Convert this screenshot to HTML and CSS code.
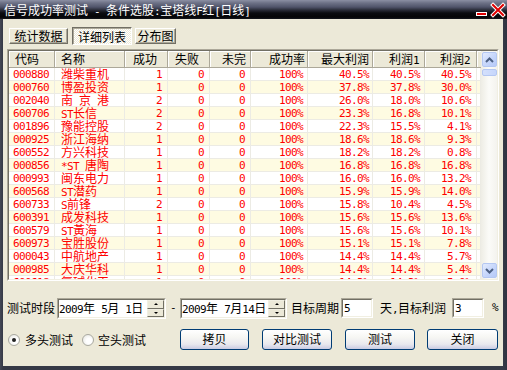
FILE: index.html
```html
<!DOCTYPE html>
<html>
<head>
<meta charset="utf-8">
<link rel="stylesheet" href="styles.css">
</head>
<body>
<div class="win">
  <div class="titlebar">
    <span class="title">信号成功率测试<span class="m"> - </span>条件选股<span class="m">:</span>宝塔线<span class="m">F</span>红<span class="m">[</span>日线<span class="m">]</span></span>
    <svg class="ctl" width="31" height="19" viewBox="0 0 31 19">
      <rect x="0" y="12" width="11" height="4" fill="#fff"/>
      <rect x="1" y="13" width="9" height="2" fill="#e00000"/>
      <path d="M17 5 L27 15 M27 5 L17 15" stroke="#fff" stroke-width="4" stroke-linecap="square"/>
      <path d="M17 5 L27 15 M27 5 L17 15" stroke="#e00000" stroke-width="2" stroke-linecap="square"/>
    </svg>
  </div>
  <div class="client">
    <div class="tabs">
      <div class="tab t1">统计数据</div>
      <div class="tab t2 on">详细列表</div>
      <div class="tab t3">分布图</div>
    </div>
    <div class="list">
      <div class="list-in">
        <div class="grid">
          <table>
            <colgroup>
              <col class="w46"><col class="w70"><col class="w43"><col class="w42"><col class="w41"><col class="w57"><col class="w65"><col class="w52"><col class="w52"><col class="w4">
            </colgroup>
            <thead>
              <tr>
                <th class="hl h1">代码</th><th class="hl h2">名称</th><th class="hr p11">成功</th><th class="hr p11">失败</th><th class="hr p5">未完</th><th class="hr p3">成功率</th><th class="hr p4">最大利润</th><th class="hr p6"><span>利润</span><span class="m">1</span></th><th class="hr p7"><span>利润</span><span class="m">2</span></th><th class="fill"></th>
              </tr>
            </thead>
            <tbody>
              <tr><td class="c">000880</td><td class="nm">潍柴重机</td><td class="n r7">1</td><td class="n r7">0</td><td class="n r7">0</td><td class="n r6">100%</td><td class="n r5">40.5%</td><td class="n r6">40.5%</td><td class="n r7">40.5%</td><td></td></tr>
              <tr><td class="c">000760</td><td class="nm">博盈投资</td><td class="n r7">1</td><td class="n r7">0</td><td class="n r7">0</td><td class="n r6">100%</td><td class="n r5">37.8%</td><td class="n r6">37.8%</td><td class="n r7">30.0%</td><td></td></tr>
              <tr><td class="c">002040</td><td class="nm">南<span class="m"> </span>京<span class="m"> </span>港</td><td class="n r7">2</td><td class="n r7">0</td><td class="n r7">0</td><td class="n r6">100%</td><td class="n r5">26.0%</td><td class="n r6">18.0%</td><td class="n r7">10.6%</td><td></td></tr>
              <tr><td class="c">600706</td><td class="nm"><span class="m">ST</span>长信</td><td class="n r7">2</td><td class="n r7">0</td><td class="n r7">0</td><td class="n r6">100%</td><td class="n r5">23.3%</td><td class="n r6">16.8%</td><td class="n r7">10.1%</td><td></td></tr>
              <tr><td class="c">001896</td><td class="nm">豫能控股</td><td class="n r7">2</td><td class="n r7">0</td><td class="n r7">0</td><td class="n r6">100%</td><td class="n r5">22.3%</td><td class="n r6">15.5%</td><td class="n r7">4.1%</td><td></td></tr>
              <tr><td class="c">000925</td><td class="nm">浙江海纳</td><td class="n r7">1</td><td class="n r7">0</td><td class="n r7">0</td><td class="n r6">100%</td><td class="n r5">18.6%</td><td class="n r6">18.6%</td><td class="n r7">9.3%</td><td></td></tr>
              <tr><td class="c">600552</td><td class="nm">方兴科技</td><td class="n r7">1</td><td class="n r7">0</td><td class="n r7">0</td><td class="n r6">100%</td><td class="n r5">18.2%</td><td class="n r6">18.2%</td><td class="n r7">0.8%</td><td></td></tr>
              <tr><td class="c">000856</td><td class="nm"><span class="m">*ST </span>唐陶</td><td class="n r7">1</td><td class="n r7">0</td><td class="n r7">0</td><td class="n r6">100%</td><td class="n r5">16.8%</td><td class="n r6">16.8%</td><td class="n r7">16.8%</td><td></td></tr>
              <tr><td class="c">000993</td><td class="nm">闽东电力</td><td class="n r7">1</td><td class="n r7">0</td><td class="n r7">0</td><td class="n r6">100%</td><td class="n r5">16.0%</td><td class="n r6">16.0%</td><td class="n r7">13.2%</td><td></td></tr>
              <tr><td class="c">600568</td><td class="nm"><span class="m">ST</span>潜药</td><td class="n r7">1</td><td class="n r7">0</td><td class="n r7">0</td><td class="n r6">100%</td><td class="n r5">15.9%</td><td class="n r6">15.9%</td><td class="n r7">14.0%</td><td></td></tr>
              <tr><td class="c">600733</td><td class="nm"><span class="m">S</span>前锋</td><td class="n r7">2</td><td class="n r7">0</td><td class="n r7">0</td><td class="n r6">100%</td><td class="n r5">15.8%</td><td class="n r6">10.4%</td><td class="n r7">4.5%</td><td></td></tr>
              <tr><td class="c">600391</td><td class="nm">成发科技</td><td class="n r7">1</td><td class="n r7">0</td><td class="n r7">0</td><td class="n r6">100%</td><td class="n r5">15.6%</td><td class="n r6">15.6%</td><td class="n r7">13.6%</td><td></td></tr>
              <tr><td class="c">600579</td><td class="nm"><span class="m">ST</span>黃海</td><td class="n r7">1</td><td class="n r7">0</td><td class="n r7">0</td><td class="n r6">100%</td><td class="n r5">15.6%</td><td class="n r6">15.6%</td><td class="n r7">10.1%</td><td></td></tr>
              <tr><td class="c">600973</td><td class="nm">宝胜股份</td><td class="n r7">1</td><td class="n r7">0</td><td class="n r7">0</td><td class="n r6">100%</td><td class="n r5">15.1%</td><td class="n r6">15.1%</td><td class="n r7">7.8%</td><td></td></tr>
              <tr><td class="c">000043</td><td class="nm">中航地产</td><td class="n r7">1</td><td class="n r7">0</td><td class="n r7">0</td><td class="n r6">100%</td><td class="n r5">14.4%</td><td class="n r6">14.4%</td><td class="n r7">5.7%</td><td></td></tr>
              <tr><td class="c">000985</td><td class="nm">大庆华科</td><td class="n r7">1</td><td class="n r7">0</td><td class="n r7">0</td><td class="n r6">100%</td><td class="n r5">14.4%</td><td class="n r6">14.4%</td><td class="n r7">5.4%</td><td></td></tr>
              <tr><td class="c">600618</td><td class="nm">氯碱化工</td><td class="n r7">1</td><td class="n r7">0</td><td class="n r7">0</td><td class="n r6">100%</td><td class="n r5">14.3%</td><td class="n r6">14.3%</td><td class="n r7">5.0%</td><td></td></tr>
            </tbody>
          </table>
        </div>
        <div class="vscroll">
          <div class="sbtn up"><svg width="9" height="6" viewBox="0 0 9 6"><path d="M1 5 L4.5 1.5 L8 5" fill="none" stroke="#4d6185" stroke-width="2"/></svg></div>
          <div class="thumb"></div>
          <div class="track"></div>
          <div class="sbtn dn"><svg width="9" height="6" viewBox="0 0 9 6"><path d="M1 1 L4.5 4.5 L8 1" fill="none" stroke="#4d6185" stroke-width="2"/></svg></div>
        </div>
      </div>
    </div>
    <div class="row1">
      <span class="lbl w48">测试时段</span>
      <div class="date d1">
        <div class="date-in">
          <span class="dtext"><span class="m">2009</span>年<span class="m"> 5</span>月<span class="m"> 1</span>日</span>
          <span class="spin"><span class="sp"><i class="au"></i></span><span class="sp"><i class="ad"></i></span></span>
        </div>
      </div>
      <span class="dash m">-</span>
      <div class="date d2">
        <div class="date-in">
          <span class="dtext"><span class="m">2009</span>年<span class="m"> 7</span>月<span class="m">14</span>日</span>
          <span class="spin"><span class="sp"><i class="au"></i></span><span class="sp"><i class="ad"></i></span></span>
        </div>
      </div>
      <span class="lbl l2">目标周期</span>
      <div class="field f1"><div class="field-in"><span class="m">5</span></div></div>
      <span class="lbl l3">天<span class="m">,</span>目标利润</span>
      <div class="field f2"><div class="field-in"><span class="m">3</span></div></div>
      <span class="lbl pct m">%</span>
    </div>
    <div class="row2">
      <label class="radio r1"><span class="dot on"></span><span>多头测试</span></label>
      <label class="radio r2"><span class="dot"></span><span>空头测试</span></label>
      <div class="btn b1">拷贝</div>
      <div class="btn b2">对比测试</div>
      <div class="btn b3">测试</div>
      <div class="btn b4">关闭</div>
    </div>
  </div>
</div>
</body>
</html>
```
FILE: styles.css
```css
html, body {
  margin: 0;
  padding: 0;
  background: #2e3240;
}
body {
  font-family: "Noto Sans CJK SC", "Noto Sans CJK JP", sans-serif;
  font-size: 12px;
  color: #000;
  overflow: hidden;
}
.m {
  font-family: "DejaVu Sans Mono", monospace;
  font-size: 11px;
  letter-spacing: -0.6px;
}
.win {
  width: 507px;
  height: 370px;
  display: flex;
  flex-direction: column;
  background: linear-gradient(90deg, #444856 0, #353946 3px, #353946 503px, #2f3340 507px);
}
.titlebar {
  height: 19px;
  flex: none;
  display: flex;
  align-items: flex-start;
  background: linear-gradient(180deg, #8b8fa3 0px, #6d7186 3px, #50546a 7px, #2a2c38 10px, #0b0c10 13px, #050506 17px, #15171d 19px);
  color: #fff;
}
.title {
  margin: 3px 0 0 4px;
  line-height: 14px;
  white-space: nowrap;
}
.ctl {
  margin-left: auto;
  flex: none;
}
.client {
  flex: 1;
  margin: 0 4px 4px 3px;
  background: #ece9d8;
  display: flex;
  flex-direction: column;
}
.tabs {
  display: flex;
  align-items: flex-start;
  height: 18px;
  margin: 8px 0 0 6px;
}
.tab {
  box-sizing: border-box;
  height: 16px;
  margin-top: 1px;
  line-height: 14px;
  text-align: center;
  border: 1px solid;
  border-color: #fff #716f64 #716f64 #fff;
  box-shadow: inset -1px -1px #aca899;
  background: #ece9d8;
  white-space: nowrap;
}
.t1 { width: 59px; }
.t2 { width: 60px; margin-left: 4px; }
.t3 { width: 41px; margin-left: 3px; }
.tab.on {
  height: 18px;
  margin-top: 0;
  line-height: 16px;
  padding-top: 1px;
  border-color: #716f64 #fff #fff #716f64;
  box-shadow: inset 1px 1px #aca899;
  background: repeating-conic-gradient(#ffffff 0 25%, #ece9d8 0 50%) 0 0 / 2px 2px;
}
.list {
  margin: 4px 0 0 4px;
  width: 492px;
  height: 232px;
  box-sizing: border-box;
  border: 1px solid;
  border-color: #aca899 #fff #fff #aca899;
}
.list-in {
  height: 100%;
  box-sizing: border-box;
  border: 1px solid;
  border-color: #716f64 #f1efe2 #f1efe2 #716f64;
  display: flex;
  background: #fff;
  overflow: hidden;
}
.grid {
  width: 472px;
  flex: none;
  overflow: hidden;
}
table {
  table-layout: fixed;
  border-collapse: separate;
  border-spacing: 0;
  width: 472px;
}
.w46 { width: 46px; }
.w70 { width: 70px; }
.w43 { width: 43px; }
.w42 { width: 42px; }
.w41 { width: 41px; }
.w57 { width: 57px; }
.w65 { width: 65px; }
.w52 { width: 52px; }
.w4 { width: 4px; }
th {
  height: 17px;
  box-sizing: border-box;
  padding: 0;
  font-weight: normal;
  background: #ece9d8;
  border-right: 1px solid #aca899;
  border-bottom: 1px solid #aca899;
  box-shadow: inset 1px 1px #fff;
  line-height: 15px;
  white-space: nowrap;
  overflow: hidden;
  vertical-align: top;
}
th .m { line-height: 10px; }
th.fill { border-right: 0; }
.hl { text-align: left; }
.hr { text-align: right; }
.h1 { padding-left: 6px; }
.h2 { padding-left: 6px; }
.p11 { padding-right: 10px; }
.p5 { padding-right: 4px; }
.p3 { padding-right: 2px; }
.p4 { padding-right: 3px; }
.p6 { padding-right: 5px; }
.p7 { padding-right: 6px; }
td {
  height: 13px;
  box-sizing: border-box;
  padding: 0;
  line-height: 12px;
  color: #ff0000;
  box-shadow: inset -1px -1px #ecebe4;
  white-space: nowrap;
  vertical-align: top;
}
td .m { line-height: 10px; }
tbody tr:nth-child(even) td { background: #fefbe2; }
.c, .n {
  font-family: "DejaVu Sans Mono", monospace;
  font-size: 11px;
  letter-spacing: -0.6px;
  line-height: 13px;
}
.c { padding-left: 4px; }
.nm { padding-left: 6px; }
.n { text-align: right; }
.r7 { padding-right: 6px; }
.r6 { padding-right: 5px; }
.r5 { padding-right: 4px; }
.vscroll {
  width: 16px;
  flex: none;
  display: flex;
  flex-direction: column;
  align-items: center;
  background: linear-gradient(90deg, #eeede5, #fbfbf8 50%, #f4f3ee);
}
.sbtn {
  width: 15px;
  height: 15px;
  box-sizing: border-box;
  border: 1px solid #b4c7f2;
  border-radius: 2px;
  background: linear-gradient(135deg, #e3ebfd, #c3d4fb 60%, #b6c9f7);
  display: flex;
  align-items: center;
  justify-content: center;
}
.up { margin-top: 1px; }
.dn { margin-bottom: 1px; }
.thumb {
  width: 15px;
  height: 7px;
  margin-top: 2px;
  box-sizing: border-box;
  border: 1px solid #b4c7f2;
  border-radius: 2px;
  background: linear-gradient(90deg, #d4e0fc, #c6d6fb);
}
.track { flex: 1; }
.row1 {
  display: flex;
  align-items: flex-start;
  height: 22px;
  margin: 17px 0 0 4px;
}
.lbl {
  line-height: 20px;
  white-space: nowrap;
}
.w48 { width: 48px; }
.date {
  box-sizing: border-box;
  height: 21px;
  border: 1px solid;
  border-color: #aca899 #fff #fff #aca899;
}
.d1 { width: 109px; margin-left: 2px; }
.d2 { width: 107px; }
.date-in {
  height: 100%;
  box-sizing: border-box;
  border: 1px solid;
  border-color: #716f64 #f1efe2 #f1efe2 #716f64;
  background: #fff;
  display: flex;
}
.dtext {
  flex: 1;
  line-height: 16px;
  white-space: nowrap;
  overflow: hidden;
}
.spin {
  width: 17px;
  display: flex;
  flex-direction: column;
}
.sp {
  flex: 1;
  box-sizing: border-box;
  border: 1px solid;
  border-color: #f1efe2 #716f64 #716f64 #f1efe2;
  background: #ece9d8;
  display: flex;
  align-items: center;
  justify-content: center;
}
.au {
  width: 0;
  height: 0;
  border-left: 2px solid transparent;
  border-right: 2px solid transparent;
  border-bottom: 2px solid #000;
}
.ad {
  width: 0;
  height: 0;
  border-left: 2px solid transparent;
  border-right: 2px solid transparent;
  border-top: 2px solid #000;
}
.dash {
  width: 14px;
  text-align: center;
  line-height: 20px;
}
.l2 { margin-left: 4px; width: 50px; }
.field {
  box-sizing: border-box;
  width: 32px;
  height: 20px;
  border: 1px solid;
  border-color: #aca899 #fff #fff #aca899;
}
.field-in {
  height: 100%;
  box-sizing: border-box;
  border: 1px solid;
  border-color: #716f64 #f1efe2 #f1efe2 #716f64;
  background: #fff;
  line-height: 14px;
  padding-left: 1px;
}
.l3 { margin-left: 7px; width: 66px; }
.f2 { margin-left: 6px; }
.pct { margin-left: 8px; }
.row2 {
  display: flex;
  align-items: center;
  height: 21px;
  margin: 9px 0 0 5px;
}
.radio {
  display: flex;
  align-items: center;
  line-height: 16px;
}
.r2 { margin-left: 9px; }
.dot {
  width: 12px;
  height: 12px;
  box-sizing: border-box;
  border: 1px solid #a9a9a0;
  border-radius: 50%;
  background: radial-gradient(circle at 60% 60%, #ffffff 30%, #e2e2dc 100%);
  margin-right: 5px;
  position: relative;
}
.r2 .dot { margin-right: 4px; }
.dot.on::after {
  content: "";
  position: absolute;
  left: 3px;
  top: 3px;
  width: 4px;
  height: 4px;
  border-radius: 50%;
  background: #222;
}
.btn {
  box-sizing: border-box;
  width: 70px;
  height: 21px;
  border: 1px solid #003c74;
  border-radius: 3px;
  background: linear-gradient(180deg, #ffffff 0%, #f6f6f3 40%, #e8e8ee 75%, #c9cbe2 100%);
  text-align: center;
  line-height: 18px;
}
.b1 { margin-left: 34px; width: 69px; }
.b2 { margin-left: 13px; }
.b3 { margin-left: 13px; }
.b4 { margin-left: 12px; width: 71px; }
```
